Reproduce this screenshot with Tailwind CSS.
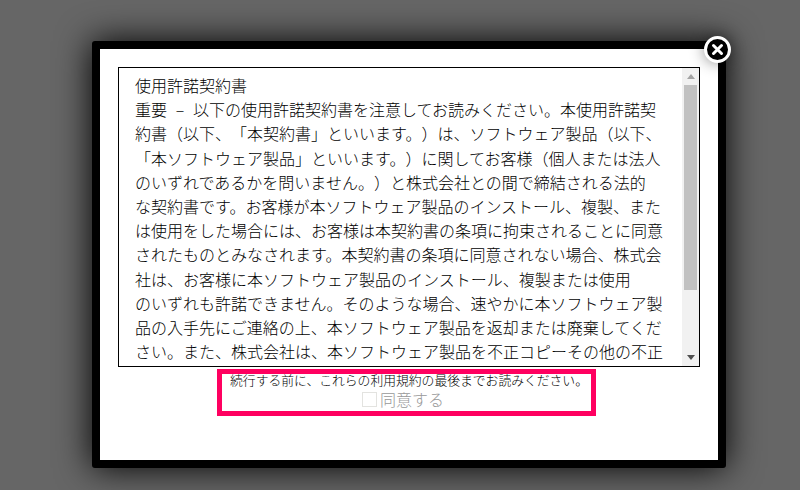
<!DOCTYPE html>
<html lang="ja">

<head>
    <title>使用許諾契約書</title>
    <meta charset="UTF-8">
    <meta name="viewport" content="width=device-width, initial-scale=1.0">
    <script src="https://cdn.jsdelivr.net/npm/@tailwindcss/browser@4"></script>
</head>

<body class="bg-[#666666] h-[490px] overflow-hidden pt-[41px] pl-[92px] font-['Noto_Sans_CJK_JP',sans-serif] [text-spacing-trim:space-all]">
    <!-- modal -->
    <div class="relative w-[634px] h-[427px] bg-white border-8 border-black rounded-[3px] shadow-[0_0_35px_#000] pt-[18px] pl-[18px]">
        <button class="absolute -top-[13px] -right-[13px] w-[27px] h-[27px] rounded-full bg-black border-[3px] border-white shadow-[0_0_15px_rgba(0,0,0,0.45)] flex items-center justify-center">
            <svg width="13" height="13" viewBox="0 0 13 13">
                <path d="M2.5 2.5L10.5 10.5M10.5 2.5L2.5 10.5" stroke="white" stroke-width="3" stroke-linecap="round" />
            </svg>
        </button>

        <!-- license text -->
        <div class="flex w-[582px] h-[300px] border border-black">
            <div class="flex-1 overflow-hidden pl-4 pt-[5px] text-[16px] leading-[24.2px] font-light text-black whitespace-nowrap">
                使用許諾契約書<br>
                重要<span class="inline-block w-[26px] text-center">–</span>以下の使用許諾契約書を注意してお読みください。本使用許諾契<br>
                約書（以下、「本契約書」といいます。）は、ソフトウェア製品（以下、<br>
                「本ソフトウェア製品」といいます。）に関してお客様（個人または法人<br>
                のいずれであるかを問いません。）と株式会社との間で締結される法的<br>
                な契約書です。お客様が本ソフトウェア製品のインストール、複製、また<br>
                は使用をした場合には、お客様は本契約書の条項に拘束されることに同意<br>
                されたものとみなされます。本契約書の条項に同意されない場合、株式会<br>
                社は、お客様に本ソフトウェア製品のインストール、複製または使用<br>
                のいずれも許諾できません。そのような場合、速やかに本ソフトウェア製<br>
                品の入手先にご連絡の上、本ソフトウェア製品を返却または廃棄してくだ<br>
                さい。また、株式会社は、本ソフトウェア製品を不正コピーその他の不正
            </div>
            <!-- scrollbar -->
            <div class="w-[17px] bg-[#f1f1f1] flex flex-col items-center">
                <div class="h-[17px] flex items-center justify-center">
                    <svg width="8" height="5" viewBox="0 0 8 5"><path d="M4 0L8 5H0Z" fill="#a3a3a3" /></svg>
                </div>
                <div class="w-[13px] h-[205px] bg-[#c1c1c1]"></div>
                <div class="flex-1"></div>
                <div class="h-[17px] flex items-center justify-center">
                    <svg width="8" height="5" viewBox="0 0 8 5"><path d="M0 0H8L4 5Z" fill="#505050" /></svg>
                </div>
            </div>
        </div>

        <!-- highlighted consent -->
        <div class="mt-[2px] ml-[99px] w-[379px] h-[47px] border-[5px] border-[#ff0060] flex flex-col items-center">
            <p class="text-[12.8px] leading-[16px] mt-[-2px] ml-[5px] font-light text-black whitespace-nowrap">続行する前に、これらの利用規約の最後までお読みください。</p>
            <label class="flex items-center mt-[1px] mr-[7px] text-[16px] leading-[20px] font-light text-[#999]">
                <span class="w-[15px] h-[15px] border border-[#e3e3e0] mr-[3px]"></span>同意する
            </label>
        </div>
    </div>
</body>

</html>
